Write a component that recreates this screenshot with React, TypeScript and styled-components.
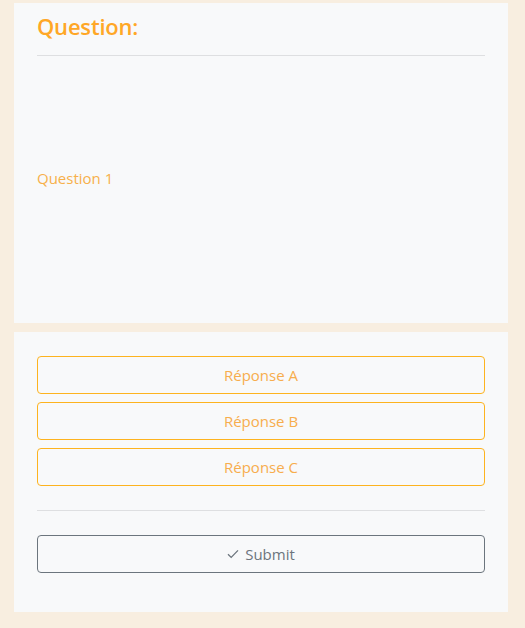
import React from 'react';
import styled, { createGlobalStyle } from 'styled-components';

const GlobalStyle = createGlobalStyle`
  html, body {
    margin: 0;
    padding: 0;
    background: #f8eee0;
  }
  body {
    font-family: 'Open Sans', 'Noto Sans', sans-serif;
  }
`;

const Page = styled.div`
  display: flex;
  flex-direction: column;
  gap: 9px;
  width: 494px;
  padding: 3px 17px 16px 14px;
`;

const Panel = styled.section<{ $height: number }>`
  display: flex;
  flex-direction: column;
  height: ${(p) => p.$height}px;
  box-sizing: border-box;
  background: #f8f9fa;
  padding: 0 23px;
`;

const Title = styled.h2`
  margin: 0;
  padding-top: 8px;
  height: 44px;
  font-size: 22px;
  line-height: 30px;
  font-weight: 600;
  color: #ffa726;
  letter-spacing: -0.2px;
`;

const Divider = styled.hr<{ $space?: number }>`
  margin: ${(p) => p.$space ?? 0}px 0;
  border: 0;
  border-top: 1px solid #dedfe1;
`;

const QuestionText = styled.p`
  margin: 0;
  padding-top: 111px;
  font-size: 15px;
  line-height: 22px;
  color: #f7b04a;
`;

const Answers = styled.div`
  display: flex;
  flex-direction: column;
  gap: 8px;
  padding-top: 24px;
`;

const AnswerButton = styled.button<{ $variant?: 'answer' | 'submit' }>`
  display: flex;
  align-items: center;
  justify-content: center;
  gap: 6px;
  height: 38px;
  width: 100%;
  border-radius: 4px;
  background: transparent;
  font-family: inherit;
  font-size: 15px;
  cursor: pointer;
  border: 1px solid ${(p) => (p.$variant === 'submit' ? '#6c757d' : '#fdb31f')};
  color: ${(p) => (p.$variant === 'submit' ? '#6c757d' : '#f7ad4d')};
`;

const answers = ['Réponse A', 'Réponse B', 'Réponse C'];

export default function App() {
  return (
    <>
      <GlobalStyle />
      <Page>
        <Panel $height={320}>
          <Title>Question:</Title>
          <Divider />
          <QuestionText>Question 1</QuestionText>
        </Panel>
        <Panel $height={280}>
          <Answers>
            {answers.map((a) => (
              <AnswerButton key={a}>{a}</AnswerButton>
            ))}
          </Answers>
          <Divider $space={24} />
          <AnswerButton $variant="submit">
            <svg width="12" height="10" viewBox="0 0 12 10" fill="none">
              <path d="M1 5.2 L4.2 8.4 L11 1.4" stroke="#6c757d" strokeWidth="1.3" />
            </svg>
            Submit
          </AnswerButton>
        </Panel>
      </Page>
    </>
  );
}
